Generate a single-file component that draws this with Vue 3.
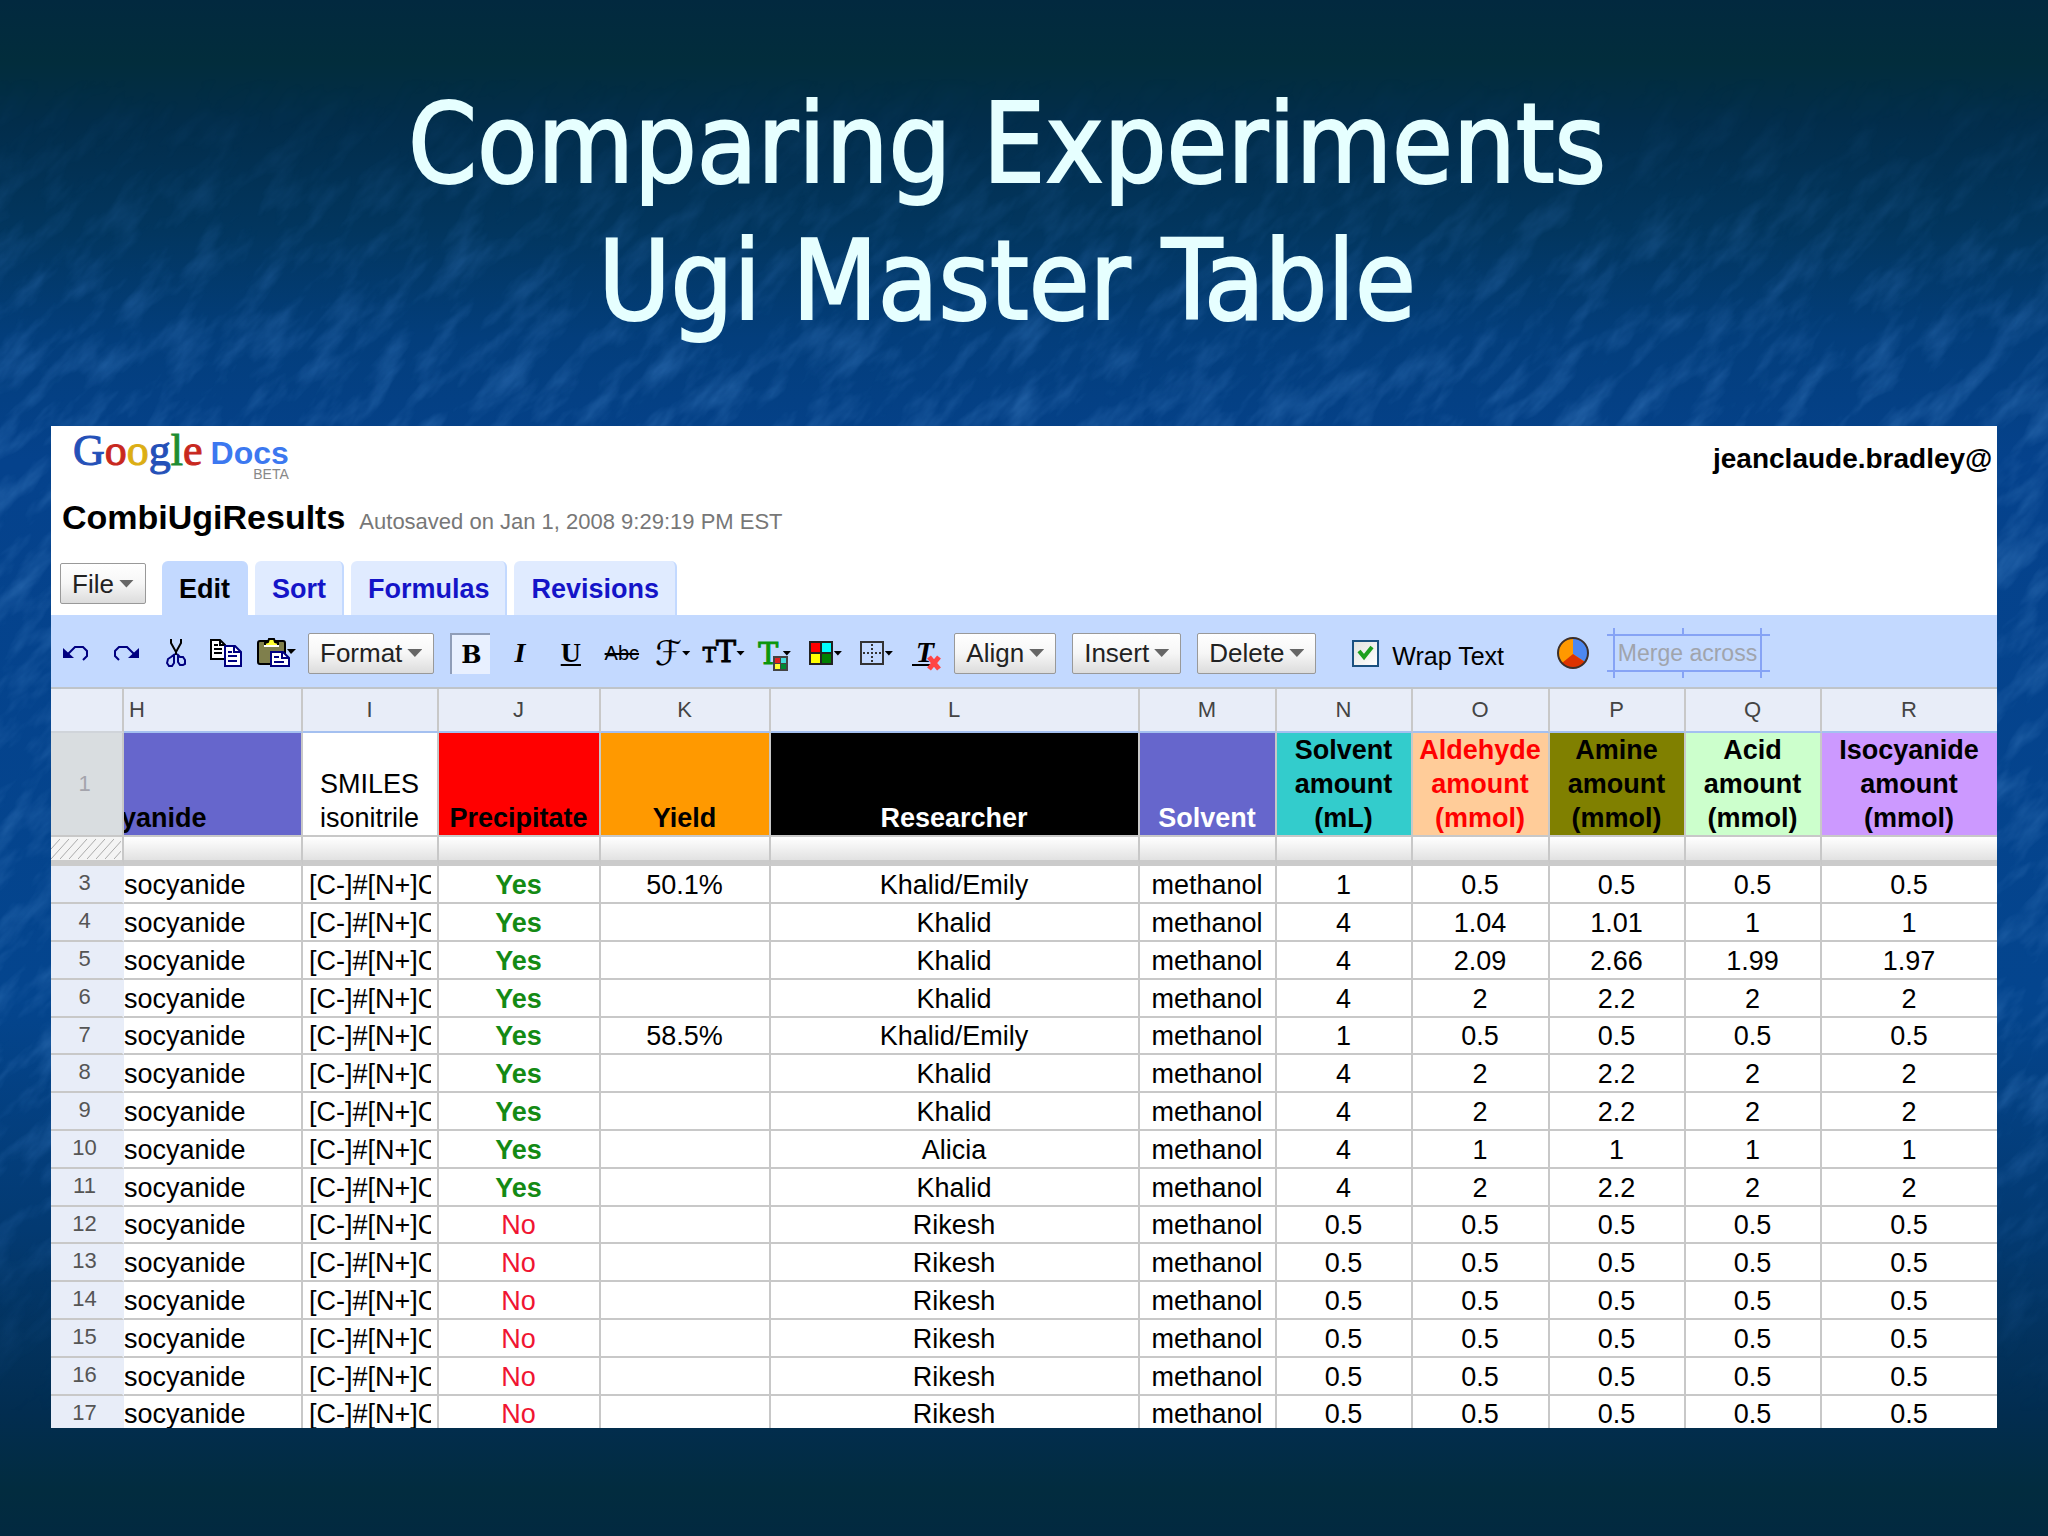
<script setup>
import { ref } from 'vue'

const wrapText = ref(true)

const tabs = [
  { label: 'Edit', active: true },
  { label: 'Sort', active: false },
  { label: 'Formulas', active: false },
  { label: 'Revisions', active: false },
]

const letters = ['H', 'I', 'J', 'K', 'L', 'M', 'N', 'O', 'P', 'Q', 'R']

const headings = [
  { key: 'h', lines: ['yanide'] },
  { key: 'i', lines: ['SMILES', 'isonitrile'] },
  { key: 'j', lines: ['Precipitate'] },
  { key: 'k', lines: ['Yield'] },
  { key: 'l', lines: ['Researcher'] },
  { key: 'm', lines: ['Solvent'] },
  { key: 'n', lines: ['Solvent', 'amount', '(mL)'] },
  { key: 'o', lines: ['Aldehyde', 'amount', '(mmol)'] },
  { key: 'p', lines: ['Amine', 'amount', '(mmol)'] },
  { key: 'q', lines: ['Acid', 'amount', '(mmol)'] },
  { key: 'r', lines: ['Isocyanide', 'amount', '(mmol)'] },
]

// precipitate, yield, researcher, solvent mL, aldehyde, amine, acid, isocyanide
const results = [
  ['Yes', '50.1%', 'Khalid/Emily', '1', '0.5', '0.5', '0.5', '0.5'],
  ['Yes', '', 'Khalid', '4', '1.04', '1.01', '1', '1'],
  ['Yes', '', 'Khalid', '4', '2.09', '2.66', '1.99', '1.97'],
  ['Yes', '', 'Khalid', '4', '2', '2.2', '2', '2'],
  ['Yes', '58.5%', 'Khalid/Emily', '1', '0.5', '0.5', '0.5', '0.5'],
  ['Yes', '', 'Khalid', '4', '2', '2.2', '2', '2'],
  ['Yes', '', 'Khalid', '4', '2', '2.2', '2', '2'],
  ['Yes', '', 'Alicia', '4', '1', '1', '1', '1'],
  ['Yes', '', 'Khalid', '4', '2', '2.2', '2', '2'],
  ...Array.from({ length: 6 }, () => ['No', '', 'Rikesh', '0.5', '0.5', '0.5', '0.5', '0.5']),
]

const rows = results.map((r, i) => ({
  number: i + 3,
  precipitate: r[0],
  yield: r[1],
  researcher: r[2],
  amounts: r.slice(3),
}))
</script>

<template>
  <main class="slide">
    <svg class="backdrop" aria-hidden="true" preserveAspectRatio="none">
      <defs>
        <linearGradient id="sea" x1="0" y1="0" x2="0" y2="1">
          <stop offset="0" stop-color="#02293f" />
          <stop offset="0.04" stop-color="#022d3c" />
          <stop offset="0.08" stop-color="#022d4b" />
          <stop offset="0.15" stop-color="#02365f" />
          <stop offset="0.22" stop-color="#033e7c" />
          <stop offset="0.3" stop-color="#05428c" />
          <stop offset="0.65" stop-color="#04458e" />
          <stop offset="0.8" stop-color="#033a72" />
          <stop offset="0.92" stop-color="#022d50" />
          <stop offset="0.97" stop-color="#022c3f" />
          <stop offset="1" stop-color="#022940" />
        </linearGradient>
        <linearGradient id="depth" x1="0" y1="0" x2="0" y2="1">
          <stop offset="0.05" stop-color="#fff" stop-opacity="0" />
          <stop offset="0.26" stop-color="#fff" stop-opacity="1" />
          <stop offset="0.7" stop-color="#fff" stop-opacity="1" />
          <stop offset="0.92" stop-color="#fff" stop-opacity="0" />
        </linearGradient>
        <mask id="depthMask">
          <rect width="100%" height="100%" fill="url(#depth)" />
        </mask>
        <filter id="ripples" x="0" y="0" width="100%" height="100%" color-interpolation-filters="sRGB">
          <feTurbulence type="fractalNoise" baseFrequency="0.016 0.045" numOctaves="4" seed="7" />
          <feColorMatrix values="0 0 0 0 0.2  0 0 0 0 0.45  0 0 0 0 0.72  1.3 0 0 0 -0.58" />
        </filter>
      </defs>
      <rect width="100%" height="100%" fill="url(#sea)" />
      <g mask="url(#depthMask)">
        <g transform="rotate(-48 1024 768)">
          <rect x="-300" y="-600" width="2700" height="2700" filter="url(#ripples)" />
        </g>
      </g>
    </svg>

    <h1 class="heading">Comparing Experiments<br />Ugi Master Table</h1>

    <section class="sheet">
      <header class="brandbar">
        <a class="brand" href="#" aria-label="Google Docs">
          <span class="google"><span class="blue">G</span><span class="red">o</span><span class="gold">o</span><span class="blue">g</span><span class="green">l</span><span class="red">e</span></span>
          <span class="docs">Docs<span class="beta">BETA</span></span>
        </a>
        <strong class="account">jeanclaude.bradley@</strong>
      </header>

      <div class="docline">
        <h2 class="docname">CombiUgiResults</h2>
        <span class="saved">Autosaved on Jan 1, 2008 9:29:19 PM EST</span>
      </div>

      <nav class="tabs">
        <button type="button" class="menu file">File<i class="caret"></i></button>
        <a v-for="tab in tabs" :key="tab.label" href="#" class="tab" :class="{ active: tab.active }">{{ tab.label }}</a>
      </nav>

      <div class="toolbar">
        <button type="button" class="tool edit" aria-label="Undo">
          <svg width="28" height="18" viewBox="0 0 28 18">
            <path d="M1 4v10h11z" fill="#000080" />
            <path d="M6 10l7-7h8l4 4v5l-4 4" fill="none" stroke="#000080" stroke-width="2" />
          </svg>
        </button>
        <button type="button" class="tool edit" aria-label="Redo">
          <svg width="28" height="18" viewBox="0 0 28 18">
            <path d="M27 4v10H16z" fill="#000080" />
            <path d="M22 10l-7-7H7L3 7v5l4 4" fill="none" stroke="#000080" stroke-width="2" />
          </svg>
        </button>
        <button type="button" class="tool edit" aria-label="Cut">
          <svg width="20" height="30" viewBox="0 0 20 30">
            <path d="M5 1v4l5 9 5-9V1M10 14v3" fill="none" stroke="#000" stroke-width="2" />
            <path d="M9 16l-4 3-3 2-1 4 2 3h3l2-3V17M11 16l3 3h3l2 3v4l-2 1h-3l-2-3v-7" fill="none" stroke="#000080" stroke-width="2" />
          </svg>
        </button>
        <button type="button" class="tool edit" aria-label="Copy">
          <svg width="33" height="28" viewBox="0 0 33 28">
            <path d="M1 1h9l5 5v14H1z" fill="#fff" stroke="#000" stroke-width="2" />
            <path d="M10 1v5h5M4 6h4M4 10h8M4 14h8" fill="none" stroke="#000" stroke-width="2" />
            <path d="M15 7h10l6 6v14H15z" fill="#fff" stroke="#000080" stroke-width="2" />
            <path d="M24 7v6h7M18 13h4M18 17h9M18 22h9" fill="none" stroke="#000080" stroke-width="2" />
          </svg>
        </button>
        <button type="button" class="tool edit" aria-label="Paste">
          <svg width="39" height="30" viewBox="0 0 39 30">
            <rect x="1" y="3" width="27" height="23" rx="2" fill="#7f7f4c" stroke="#000" stroke-width="2" />
            <path d="M8 8V5l3-1 1-3h5l1 3 3 1v3z" fill="#ff3" stroke="#000" stroke-width="2" />
            <path d="M7 8h15" stroke="#fff" stroke-width="2" />
            <path d="M14 14h12l6 6v8H14z" fill="#fff" stroke="#000080" stroke-width="2" />
            <path d="M25 14v6h7M17 19h5M17 24h10" fill="none" stroke="#000080" stroke-width="2" />
            <path d="M30 11h9l-5 5z" fill="#000" />
          </svg>
        </button>

        <button type="button" class="menu format">Format<i class="caret"></i></button>
        <button type="button" class="bold" aria-pressed="true" aria-label="Bold">B</button>

        <div class="styles">
          <button type="button" class="tool glyph italic" aria-label="Italic">I</button>
          <button type="button" class="tool glyph underline" aria-label="Underline">U</button>
          <button type="button" class="tool strike" aria-label="Strikethrough">Abc</button>
          <button type="button" class="tool script" aria-label="Font">ℱ<i class="nib"></i></button>
          <button type="button" class="tool sizes" aria-label="Font size"><small>T</small>T<i class="nib"></i></button>
          <button type="button" class="tool tint" aria-label="Text color">
            T
            <svg class="swatch" width="15" height="15" viewBox="0 0 15 15">
              <rect width="15" height="15" fill="#444" />
              <path d="M2 2h5v5H2z" fill="#e02020" />
              <path d="M8 2h5v5H8z" fill="#4dd" />
              <path d="M2 8h5v5H2z" fill="#ff3" />
              <path d="M8 8h5v5H8z" fill="#083" />
            </svg>
            <i class="nib"></i>
          </button>
          <button type="button" class="tool" aria-label="Background color">
            <svg width="24" height="24" viewBox="0 0 24 24">
              <rect width="24" height="24" fill="#222" />
              <path d="M2 2h9v9H2z" fill="#f00" />
              <path d="M13 2h9v9h-9z" fill="#0ff" />
              <path d="M2 13h9v9H2z" fill="#ff0" />
              <path d="M13 13h9v9h-9z" fill="#008000" />
            </svg>
            <i class="nib"></i>
          </button>
          <button type="button" class="tool" aria-label="Borders">
            <svg width="24" height="24" viewBox="0 0 24 24">
              <rect x="1" y="1" width="22" height="22" fill="none" stroke="#333" stroke-width="2" />
              <path d="M12 3v18M3 12h18" stroke="#333" stroke-width="2" stroke-dasharray="2 2" />
            </svg>
            <i class="nib"></i>
          </button>
          <button type="button" class="tool clear" aria-label="Clear formatting">
            <span class="cleartext">T</span>
            <svg class="cross" width="14" height="16" viewBox="0 0 14 16">
              <path d="M2 2l10 12M12 2L2 14" stroke="#f44" stroke-width="5" />
            </svg>
          </button>
        </div>

        <div class="menus">
          <button type="button" class="menu">Align<i class="caret"></i></button>
          <button type="button" class="menu">Insert<i class="caret"></i></button>
          <button type="button" class="menu">Delete<i class="caret"></i></button>
        </div>

        <label class="wrap">
          <span class="tickbox">
            <input v-model="wrapText" type="checkbox" />
            <svg v-if="wrapText" class="tick" width="17" height="16" viewBox="0 0 17 16">
              <path d="M2 6l5 6 8-10" fill="none" stroke="#1ea01e" stroke-width="4" />
            </svg>
          </span>
          <span class="wraptext">Wrap Text</span>
        </label>

        <button type="button" class="chart" aria-label="Insert chart">
          <svg width="34" height="34" viewBox="0 0 34 34">
            <circle cx="17" cy="17" r="15" fill="#ff9900" />
            <path d="M17 18V2a15 15 0 0 1 12 24z" fill="#4d88f0" />
            <path d="M17 18l12 8a15 15 0 0 1-23 1z" fill="#dd3300" />
            <circle cx="17" cy="17" r="15" fill="none" stroke="#3c2f2a" stroke-width="2" />
          </svg>
        </button>

        <button type="button" class="merge" disabled>
          Merge across
          <svg class="guides" viewBox="0 0 163 50" width="163" height="50" aria-hidden="true">
            <path d="M0 7h163M0 43h163M7 0v50M154 0v50M76 0v7M76 43v7" fill="none" stroke="#86a3f5" stroke-width="2" />
          </svg>
        </button>
      </div>

      <table class="grid">
        <colgroup>
          <col class="w-num" />
          <col class="w-h" />
          <col class="w-i" />
          <col class="w-j" />
          <col class="w-k" />
          <col class="w-l" />
          <col class="w-wide" />
          <col class="w-amount" />
          <col class="w-wide" />
          <col class="w-amount" span="2" />
          <col />
        </colgroup>
        <thead>
          <tr class="letters">
            <th></th>
            <th v-for="letter in letters" :key="letter" scope="col" :class="{ first: letter === 'H' }">{{ letter }}</th>
          </tr>
          <tr class="titles">
            <th class="rownum" scope="row">1</th>
            <th v-for="h in headings" :key="h.key" :class="'head-' + h.key">
              <span v-for="line in h.lines" :key="line" class="line">{{ line }}</span>
            </th>
          </tr>
          <tr class="divider">
            <td class="hatch">
              <svg width="100%" height="20" aria-hidden="true">
                <defs>
                  <pattern id="hatch" width="9" height="20" patternUnits="userSpaceOnUse">
                    <path d="M-9 20L9 0M0 20L18 0" stroke="#aaa" stroke-width="1" />
                  </pattern>
                </defs>
                <rect width="100%" height="20" fill="url(#hatch)" />
              </svg>
            </td>
            <td v-for="letter in letters" :key="letter"></td>
          </tr>
        </thead>
        <tbody>
          <tr v-for="row in rows" :key="row.number">
            <th class="rownum" scope="row">{{ row.number }}</th>
            <td class="name">socyanide</td>
            <td class="smiles"><span class="clip">[C-]#[N+]C</span></td>
            <td :class="row.precipitate === 'Yes' ? 'yes' : 'no'">{{ row.precipitate }}</td>
            <td>{{ row.yield }}</td>
            <td>{{ row.researcher }}</td>
            <td>methanol</td>
            <td v-for="(amount, i) in row.amounts" :key="i">{{ amount }}</td>
          </tr>
        </tbody>
      </table>
    </section>
  </main>
</template>

<style>
body {
  margin: 0;
}
</style>

<style scoped>
.slide {
  position: relative;
  box-sizing: border-box;
  display: flex;
  flex-direction: column;
  height: 100vh;
  padding: 76px 51px 108px;
  background: #05428c;
  font-family: "Liberation Sans", Arial, sans-serif;
}

.backdrop {
  position: absolute;
  inset: 0;
  width: 100%;
  height: 100%;
}

.heading {
  position: relative;
  margin: 0 0 76px;
  padding-right: 34px;
  color: #e6ffff;
  font-family: "DejaVu Sans Condensed", "DejaVu Sans", Tahoma, sans-serif;
  font-size: 110px;
  font-weight: 400;
  font-stretch: condensed;
  line-height: 137px;
  text-align: center;
  -webkit-text-stroke: 2px #e6ffff;
}

.sheet {
  position: relative;
  flex: 1;
  min-height: 0;
  overflow: hidden;
  background: #fff;
  color: #000;
}

button {
  margin: 0;
  padding: 0;
  border: 0;
  background: none;
  color: #000;
  font-family: inherit;
}

/* brand, document name */
.brandbar {
  display: flex;
  justify-content: space-between;
  height: 64px;
  padding-left: 22px;
}

.brand {
  display: flex;
  gap: 8px;
  text-decoration: none;
}

.google {
  font-family: "Liberation Serif", "Times New Roman", serif;
  font-size: 44px;
  line-height: 50px;
  -webkit-text-stroke: 1px;
}

.blue { color: #2450b8; }
.red { color: #c8281e; }
.gold { color: #dcae14; }
.green { color: #1e8c32; }

.docs {
  display: flex;
  flex-direction: column;
  color: #3c78f0;
  font-size: 32px;
  font-weight: 700;
  line-height: 54px;
}

.beta {
  margin-top: -16px;
  color: #888;
  font-size: 14px;
  font-weight: 400;
  line-height: 20px;
  text-align: right;
}

.account {
  width: 284px;
  font-size: 28px;
  line-height: 66px;
  white-space: nowrap;
}

.docline {
  display: flex;
  align-items: baseline;
  gap: 14px;
  height: 71px;
  padding-left: 11px;
}

.docname {
  margin: 0;
  font-size: 34px;
  line-height: 54px;
}

.saved {
  color: #777;
  font-size: 22px;
}

/* tabs */
.tabs {
  display: flex;
  gap: 7px;
  padding-left: 9px;
}

.file {
  margin: 2px 9px 0 0;
}

.tab {
  box-sizing: border-box;
  height: 54px;
  padding: 0 16px 0 17px;
  border-right: 2px solid #c3d9ff;
  border-radius: 6px 6px 0 0;
  background: #e0ebff;
  color: #1414c8;
  font-size: 27px;
  font-weight: 700;
  line-height: 56px;
  text-decoration: none;
}

.tab.active {
  background: #c3d9ff;
  color: #000;
}

.menu {
  box-sizing: border-box;
  display: flex;
  align-items: center;
  gap: 5px;
  height: 41px;
  padding: 0 11px;
  border: 1px solid #999;
  border-radius: 2px;
  background: linear-gradient(#fff, #f6f6f6 50%, #dcdcdc);
  color: #222;
  font-size: 26px;
  line-height: 38px;
}

.caret {
  width: 15px;
  height: 8px;
  background: #666;
  clip-path: polygon(0 0, 100% 0, 50% 100%);
}

/* toolbar */
.toolbar {
  display: flex;
  align-items: center;
  box-sizing: border-box;
  height: 74px;
  padding-top: 4px;
  border-bottom: 2px solid #bfc4c9;
  background: #c3d9ff;
}

.tool {
  position: relative;
  display: flex;
  flex: none;
  align-items: center;
  justify-content: center;
  width: 51px;
  height: 41px;
  font-family: "Liberation Serif", "Times New Roman", serif;
}

.edit {
  width: 50px;
}

.format {
  margin: 0 16px 0 7px;
}

.bold {
  box-sizing: border-box;
  width: 40px;
  height: 41px;
  margin-right: 4px;
  border-top: 2px solid #8f9db8;
  border-left: 2px solid #8f9db8;
  background: #e8f0ff;
  font-family: "DejaVu Serif", serif;
  font-size: 24px;
  font-weight: 700;
}

.styles {
  display: flex;
}

.glyph {
  font-size: 28px;
  font-weight: 700;
}

.italic {
  font-style: italic;
}

.underline {
  text-decoration: underline;
}

.strike {
  font-family: "Liberation Sans", Arial, sans-serif;
  font-size: 20px;
  text-decoration: line-through;
}

.script {
  font-family: "DejaVu Sans", "DejaVu Serif", serif;
  font-size: 34px;
}

.sizes {
  align-items: baseline;
  font-family: "DejaVu Serif", serif;
  font-size: 30px;
  line-height: 38px;
  -webkit-text-stroke: 1px;
}

.sizes small {
  font-size: 20px;
}

.nib {
  align-self: center;
  width: 9px;
  height: 5px;
  background: #000;
  clip-path: polygon(0 0, 100% 0, 50% 100%);
}

.tint {
  color: #0a960a;
  font-family: "DejaVu Serif", serif;
  font-size: 30px;
  gap: 4px;
  -webkit-text-stroke: 1px;
}

.swatch {
  position: absolute;
  left: 24px;
  top: 23px;
}

.clear {
  padding-right: 6px;
}

.cleartext {
  border-bottom: 2px solid #000;
  padding: 0 4px;
  font-size: 30px;
  font-style: italic;
  font-weight: 700;
  line-height: 24px;
}

.cross {
  position: absolute;
  left: 25px;
  top: 22px;
}

.menus {
  display: flex;
  gap: 16px;
  padding-left: 1px;
}

.wrap {
  display: flex;
  align-items: center;
  gap: 13px;
  margin-left: 36px;
  font-size: 25px;
  white-space: nowrap;
}

.wraptext {
  padding-top: 6px;
}

.tickbox {
  position: relative;
  display: flex;
}

.tickbox input {
  box-sizing: border-box;
  width: 27px;
  height: 27px;
  margin: 0;
  appearance: none;
  border: 2px solid #1c5180;
  background: linear-gradient(135deg, #e4e4e0, #fff);
}

.tick {
  position: absolute;
  left: 5px;
  top: 5px;
}

.chart {
  display: flex;
  margin: 0 17px 0 52px;
}

.merge {
  position: relative;
  width: 163px;
  height: 50px;
  padding-right: 2px;
  color: #a0a4ac;
  font-size: 23px;
  line-height: 46px;
  white-space: nowrap;
}

.guides {
  position: absolute;
  left: 0;
  top: 0;
}

/* spreadsheet */
.grid {
  width: 100%;
  table-layout: fixed;
  border-collapse: separate;
  border-spacing: 0;
}

.w-num { width: 73px; }
.w-h { width: 179px; }
.w-i { width: 136px; }
.w-j { width: 162px; }
.w-k { width: 170px; }
.w-l { width: 369px; }
.w-wide { width: 137px; }
.w-amount { width: 136px; }

th,
td {
  padding: 0 1px 0 0;
  border-right: 2px solid #c8c8c8;
  border-bottom: 2px solid #c8c8c8;
  font-size: 27px;
  text-align: center;
  white-space: nowrap;
}

tbody td {
  padding: 2px 1px 0 0;
  line-height: 34px;
}

th:last-child,
td:last-child {
  border-right: 0;
}

.letters th {
  border-bottom-color: #a4c0f0;
  background: #e8edf8;
  color: #444;
  font-size: 22px;
  font-weight: 400;
  line-height: 42px;
}

.letters th:first-child {
  border-bottom-color: #d0d4da;
}

.letters .first {
  padding-left: 5px;
  text-align: left;
}

.titles th {
  height: 102px;
  line-height: 34px;
  vertical-align: bottom;
}

.line {
  display: block;
}

.head-h { background: #6666cc; }
.head-h .line { overflow: hidden; text-indent: -3px; text-align: left; }
.titles .head-i { font-weight: 400; }
.head-j { background: #ff0000; }
.head-k { background: #ff9900; }
.head-l { background: #000; color: #fff; }
.head-m { background: #6666cc; color: #fff; }
.head-n { background: #33cccc; }
.head-o { background: #ffcc99; color: #ff0000; }
.head-p { background: #808000; }
.head-q { background: #ccffcc; }
.head-r { background: #cc99ff; }

.divider td {
  height: 23px;
  border-bottom: 6px solid #cbcbcb;
  background: linear-gradient(#fff, #e2e2e2);
  line-height: 0;
}

.divider .hatch {
  background: #f4f4f4;
}

.rownum {
  padding-right: 4px;
  color: #555;
  font-size: 22px;
  font-weight: 400;
}

.titles .rownum {
  background: #d9dde0;
  color: #a4a4ac;
  vertical-align: middle;
}

tbody .rownum {
  border-right-color: #e8edf8;
  background: #e8edf8;
  line-height: 33px;
  vertical-align: top;
}

tbody tr:nth-child(5n) td {
  line-height: 33px;
}

tbody .name {
  text-align: left;
}

tbody .smiles {
  padding-right: 6px;
  padding-left: 6px;
  text-align: left;
}

.clip {
  display: block;
  overflow: hidden;
}

.yes {
  color: #148a14;
  font-weight: 700;
}

.no {
  color: #f01432;
}
</style>
